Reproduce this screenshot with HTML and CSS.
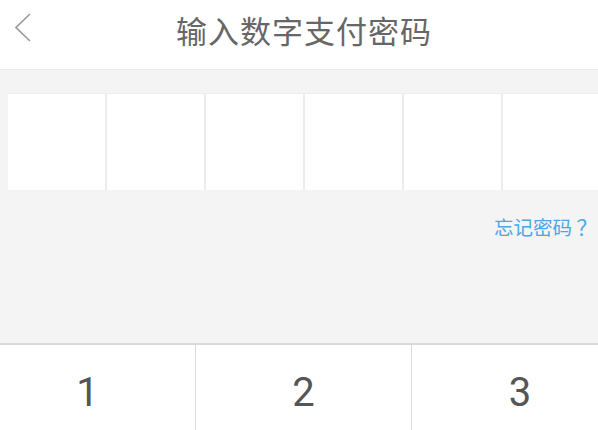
FILE: index.html
```html
<!DOCTYPE html>
<html lang="zh-CN">
<head>
<meta charset="utf-8">
<title>输入数字支付密码</title>
<link rel="stylesheet" href="styles.css">
</head>
<body>
<div class="app">
  <header class="header">
    <button class="back" aria-label="返回">
      <svg width="16" height="30" viewBox="0 0 16 30"><polyline points="15,1 1,14.5 15,28" fill="none" stroke="#9a9a9a" stroke-width="1.6"/></svg>
    </button>
    <h1 class="title">输入数字支付密码</h1>
  </header>
  <main class="content">
    <div class="pin-row">
      <div class="pin-cell"></div>
      <div class="pin-cell"></div>
      <div class="pin-cell"></div>
      <div class="pin-cell"></div>
      <div class="pin-cell"></div>
      <div class="pin-cell"></div>
    </div>
    <div class="forgot-row"><a class="forgot">忘记密码<span class="q">？</span></a></div>
  </main>
  <div class="keypad">
    <div class="key">1</div>
    <div class="key">2</div>
    <div class="key">3</div>
  </div>
</div>
</body>
</html>
```

FILE: styles.css
```css
html, body {
  margin: 0;
  padding: 0;
  background: #f4f4f4;
  overflow: hidden;
}
body {
  width: 598px;
  height: 430px;
  font-family: "Noto Sans CJK SC", "Noto Sans", sans-serif;
}
.app {
  width: 648px;
  margin-left: -20px;
}
.header {
  position: relative;
  height: 69px;
  background: #ffffff;
  border-bottom: 1px solid #ececec;
  display: flex;
  align-items: center;
  justify-content: center;
}
.back {
  position: absolute;
  left: 35px;
  top: 13px;
  padding: 0;
  border: 0;
  background: none;
  width: 16px;
  height: 30px;
}
.back svg { display: block; }
.title {
  margin: 0;
  margin-top: -10px;
  font-size: 31px;
  font-weight: 400;
  color: #666666;
  letter-spacing: 1px;
}
.content {
  padding: 23px 28px 0;
  height: 250px;
}
.pin-row {
  display: flex;
  gap: 2px;
  background: #ececec;
  border-top: 1px solid #eeeeee;
  width: 600px;
}
.pin-cell {
  flex: 0 0 97px;
  height: 96px;
  background: #ffffff;
}
.forgot-row {
  display: flex;
  justify-content: flex-end;
  padding-top: 21px;
  margin-right: -2px;
}
.forgot {
  font-size: 19.5px;
  line-height: 30px;
  color: #4aa6e8;
  white-space: nowrap;
}
.forgot .q {
  display: inline-block;
  width: 30px;
  text-align: center;
  font-size: 21px;
}
.keypad {
  display: grid;
  grid-template-columns: repeat(3, 1fr);
  border-top: 2px solid #d9d9d9;
  background: #ffffff;
}
.key {
  height: 95px;
  display: flex;
  align-items: center;
  justify-content: center;
  font-family: Roboto, "Liberation Sans", sans-serif;
  font-size: 40px;
  color: #555555;
  border-right: 1px solid #d9d9d9;
}
.key:last-child { border-right: 0; }
```
